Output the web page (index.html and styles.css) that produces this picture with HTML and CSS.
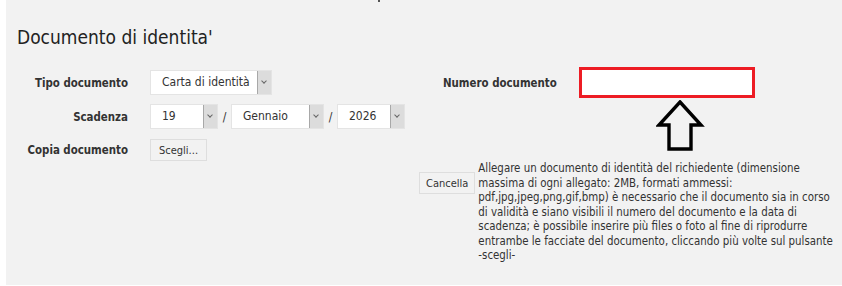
FILE: index.html
```html
<!DOCTYPE html>
<html>
<head>
  <meta charset="UTF-8">
  <title>Documento di identita'</title>
  <link rel="stylesheet" href="styles.css">
</head>

<body>
  <div class="panel">
    <span class="tick"></span>
    <h1 class="title">Documento di identita'</h1>

    <div class="form">
      <div class="row row-tipo">
        <label class="lbl">Tipo documento</label>
        <div class="field">
          <div class="sel sel-tipo"><span class="val">Carta di identità</span><span class="btn"></span></div>
        </div>
        <div class="aside">
          <label class="lbl lbl-num">Numero documento</label>
          <input class="num" type="text">
        </div>
      </div>

      <div class="row row-scad">
        <label class="lbl">Scadenza</label>
        <div class="field">
          <div class="sel sel-day"><span class="val">19</span><span class="btn"></span></div>
          <span class="slash">/</span>
          <div class="sel sel-month"><span class="val">Gennaio</span><span class="btn"></span></div>
          <span class="slash">/</span>
          <div class="sel sel-year"><span class="val">2026</span><span class="btn"></span></div>
        </div>
      </div>

      <div class="row row-copia">
        <label class="lbl">Copia documento</label>
        <div class="field">
          <button class="small-btn" type="button">Scegli...</button>
        </div>
      </div>

      <div class="row row-help">
        <div class="help">
          <button class="small-btn cancel" type="button">Cancella</button>
          <p class="note">Allegare un documento di identità del richiedente (dimensione<br>massima di ogni allegato: 2MB, formati ammessi:<br>pdf,jpg,jpeg,png,gif,bmp) è necessario che il documento sia in corso<br>di validità e siano visibili il numero del documento e la data di<br>scadenza; è possibile inserire più files o foto al fine di riprodurre<br>entrambe le facciate del documento, cliccando più volte sul pulsante<br>-scegli-</p>
        </div>
      </div>
    </div>

    <!-- annotation arrow pointing at the number field -->
    <svg class="arrow" width="50" height="52" viewBox="0 0 50 52">
      <path d="M24 2 L45 25 L35 25 L35 49 L13 49 L13 25 L3 25 Z" fill="none" stroke="#000" stroke-width="3.4" stroke-linejoin="miter"/>
    </svg>
  </div>
</body>

</html>
```

FILE: styles.css
```css
html, body {
  margin: 0;
  padding: 0;
  background: #fff;
  overflow: hidden;
}

body {
  font-family: "DejaVu Sans Condensed", "DejaVu Sans", sans-serif;
  font-stretch: condensed;
  color: #333;
}

.panel {
  position: relative;
  margin-left: 6px;
  height: 285px;
  background: #f2f2f2;
  padding-left: 11px;
  overflow: hidden;
}

.tick {
  position: absolute;
  left: 372px;
  top: 0;
  width: 2px;
  height: 2px;
  background: #555;
}

.title {
  margin: 0;
  padding-top: 26px;
  font-size: 19px;
  font-weight: normal;
  color: #222;
  line-height: 22px;
}

.form {
  margin-top: 19px;
}

.row {
  display: flex;
  align-items: center;
}

.lbl {
  font-weight: bold;
  font-size: 11.4px;
  color: #333;
}

.row > .lbl {
  width: 111px;
  text-align: right;
  margin-right: 22px;
}

.field {
  display: flex;
  align-items: center;
  width: 269px;
}

.aside {
  display: flex;
  align-items: center;
  padding-left: 24px;
}

.lbl-num {
  width: 136px;
}

.num {
  box-sizing: border-box;
  width: 176px;
  height: 31px;
  border: 3px solid #ed1c24;
  background: #fff;
  outline: none;
  margin: 0;
}

.row-scad {
  margin-top: 6px;
}

.row-copia {
  margin-top: 10px;
}

.sel {
  box-sizing: border-box;
  display: flex;
  height: 25px;
  background: #fff;
  border: 1px solid #e4e4e4;
}

.sel .val {
  flex: 1;
  padding-left: 11px;
  font-size: 12px;
  line-height: 23px;
  color: #333;
}

.sel .btn {
  width: 13px;
  background: #dcdcdc;
  border-left: 1px solid #a8a8a8;
  position: relative;
}

.sel .btn::after {
  content: "";
  position: absolute;
  left: 4px;
  top: 8px;
  width: 3px;
  height: 3px;
  border-right: 1px solid #666;
  border-bottom: 1px solid #666;
  transform: rotate(45deg);
}

.sel-tipo { width: 122px; }
.sel-day { width: 68px; }
.sel-month { width: 93px; }
.sel-year { width: 68px; }

.slash {
  width: 13px;
  text-align: center;
  font-size: 12px;
}

.small-btn {
  box-sizing: border-box;
  height: 22px;
  padding: 0 8px;
  background: #f2f2f2;
  border: 1px solid #dedede;
  font-family: inherit;
  font-size: 11px;
  color: #333;
  margin: 0;
}

.help {
  display: flex;
  align-items: flex-start;
  margin-left: 402px;
}

.cancel {
  margin-top: 11px;
  padding: 0 6px;
}

.note {
  margin: 0 0 0 3px;
  font-size: 11.4px;
  line-height: 14.5px;
  white-space: nowrap;
}

.arrow {
  position: absolute;
  left: 650px;
  top: 100px;
}
```
